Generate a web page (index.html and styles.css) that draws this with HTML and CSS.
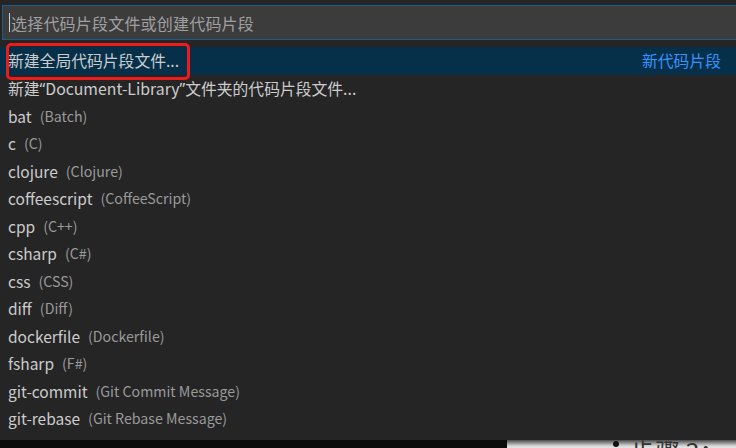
FILE: index.html
```html
<!DOCTYPE html>
<html lang="zh-CN">
<head>
<meta charset="utf-8">
<link rel="stylesheet" href="styles.css">
</head>
<body>
<div class="panel">
  <div class="input">
    <span class="caret"></span>
    <span class="placeholder">选择代码片段文件或创建代码片段</span>
  </div>
  <div class="list">
    <div class="row selected">
      <span class="label cjk">新建全局代码片段文件...</span>
      <span class="right cjk">新代码片段</span>
      <span class="mark"></span>
    </div>
    <div class="row"><span class="label cjk">新建<span class="q">“</span>Document-Library<span class="q">”</span>文件夹的代码片段文件...</span></div>
    <div class="row"><span class="label">bat</span><span class="desc">(Batch)</span></div>
    <div class="row"><span class="label">c</span><span class="desc">(C)</span></div>
    <div class="row"><span class="label">clojure</span><span class="desc">(Clojure)</span></div>
    <div class="row"><span class="label">coffeescript</span><span class="desc">(CoffeeScript)</span></div>
    <div class="row"><span class="label">cpp</span><span class="desc">(C++)</span></div>
    <div class="row"><span class="label">csharp</span><span class="desc">(C#)</span></div>
    <div class="row"><span class="label">css</span><span class="desc">(CSS)</span></div>
    <div class="row"><span class="label">diff</span><span class="desc">(Diff)</span></div>
    <div class="row"><span class="label">dockerfile</span><span class="desc">(Dockerfile)</span></div>
    <div class="row"><span class="label">fsharp</span><span class="desc">(F#)</span></div>
    <div class="row"><span class="label">git-commit</span><span class="desc">(Git Commit Message)</span></div>
    <div class="row"><span class="label">git-rebase</span><span class="desc">(Git Rebase Message)</span></div>
  </div>
</div>
<div class="below">
  <div class="below-dark"></div>
  <div class="below-doc">
    <span class="bullet"></span>
    <span class="doc-text">步骤 3：启</span>
  </div>
</div>
</body>
</html>
```

FILE: styles.css
```css
html, body {
  margin: 0;
  padding: 0;
}
body {
  width: 736px;
  height: 448px;
  overflow: hidden;
  background: #252526;
  font-family: "Noto Sans CJK SC", "Noto Sans", sans-serif;
  color: #cccccc;
}
.panel {
  height: 440px;
  padding-top: 5px;
  box-sizing: border-box;
  background: #252526;
}
.input {
  margin-left: 2px;
  height: 35px;
  box-sizing: border-box;
  border: 1px solid #1c5d8c;
  border-right: none;
  background: #3c3c3c;
  display: flex;
  align-items: center;
  padding-left: 6px;
  position: relative;
}
.caret {
  width: 1px;
  height: 19px;
  background: #d0d0d0;
  margin-right: 1px;
}
.placeholder {
  font-size: 16px;
  color: #a0a0a0;
  letter-spacing: 0.2px;
}
.list {
  margin-top: 7px;
}
.row {
  height: 27.5px;
  display: flex;
  align-items: center;
  padding-left: 8px;
  padding-right: 15px;
  font-size: 15.5px;
  white-space: nowrap;
  position: relative;
}
.row.selected {
  background: #06304a;
}
.label {
  color: #cccccc;
}
.cjk {
  font-size: 15.8px;
}
.q {
  font-family: "Noto Sans", sans-serif;
}
.desc {
  margin-left: 8px;
  color: #9a9a9a;
  font-size: 14.2px;
}
.right {
  margin-left: auto;
  color: #3794ff;
}
.mark {
  position: absolute;
  left: 6px;
  top: -4px;
  width: 184px;
  height: 37px;
  box-sizing: border-box;
  border: 3px solid #ec1c1c;
  border-radius: 5px;
}
.below {
  height: 8px;
  display: flex;
}
.below-dark {
  width: 507px;
  background: #0b0b0b;
}
.below-doc {
  flex: 1;
  background: linear-gradient(#4a4a4a, #d8d8d8 6px, #e6e6e6);
  position: relative;
  overflow: hidden;
}
.bullet {
  position: absolute;
  left: 106px;
  top: 1px;
  width: 6px;
  height: 6px;
  border-radius: 50%;
  background: #111;
}
.doc-text {
  position: absolute;
  left: 123px;
  top: -1px;
  font-size: 25px;
  line-height: 25px;
  color: #333;
}
```
